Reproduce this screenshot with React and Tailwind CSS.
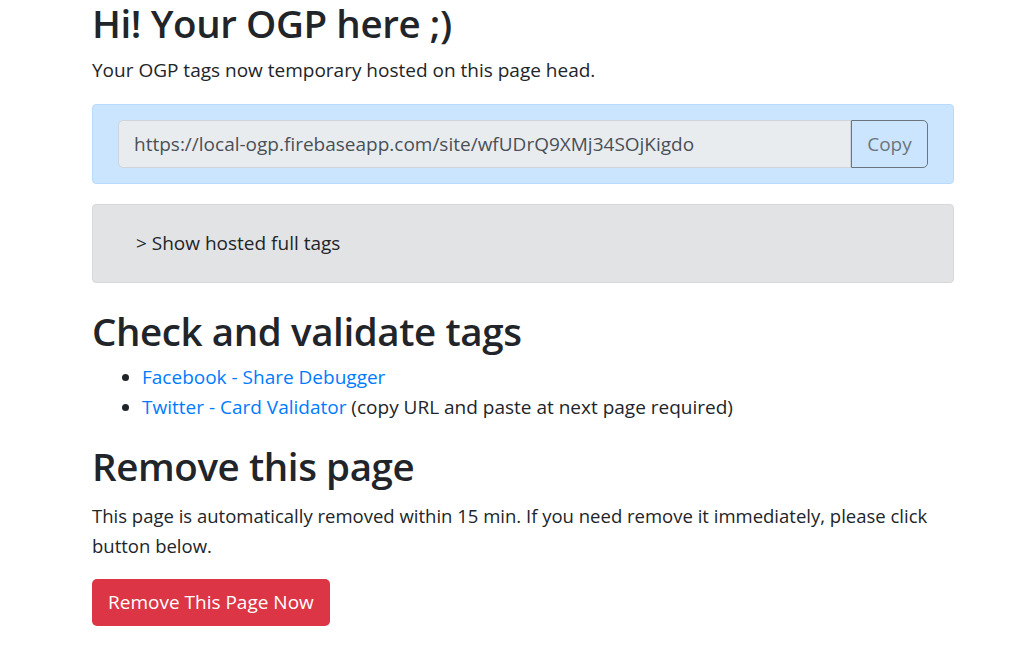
// App.jsx — OGP hosted page

const font = { fontFamily: '"Open Sans", "Noto Sans", "Liberation Sans", sans-serif' };

const UrlBox = ({ url }) => (
  <div className="h-[80px] rounded-[4px] border border-[#b8daff] bg-[#cce5ff] px-[25px] py-[15px]">
    <div className="flex h-[48px]">
      <div className="flex flex-1 items-center rounded-l-[5px] border border-[#ced4da] bg-[#e9ecef] px-[15px] text-[19px] text-[#495057]">
        {url}
      </div>
      <button className="w-[77px] rounded-r-[5px] border border-[#6c757d] text-[19px] text-[#6c757d]">Copy</button>
    </div>
  </div>
);

export default function App() {
  return (
    <div className="min-h-[650px] bg-white" style={font}>
      <div className="ml-[92px] w-[862px] text-[#212529]">
        <h1 className="text-[38.5px] font-semibold leading-[46px] tracking-[-0.4px]">Hi! Your OGP here ;)</h1>
        <p className="mt-[10px] text-[19px] leading-[28px]">Your OGP tags now temporary hosted on this page head.</p>

        <div className="mt-[20px]">
          <UrlBox url="https://local-ogp.firebaseapp.com/site/wfUDrQ9XMj34SOjKigdo" />
        </div>

        <div className="mt-[20px] flex h-[79px] items-center rounded-[4px] border border-[#d6d8db] bg-[#e2e3e5] pl-[43px] text-[19px]">
          &gt; Show hosted full tags
        </div>

        <h2 className="mt-[28px] text-[38.5px] font-semibold leading-[40px] tracking-[-0.4px]">Check and validate tags</h2>
        <ul className="mt-[11px] list-disc pl-[50px] text-[19px] leading-[30px]">
          <li><a href="#" className="text-[#007bff]">Facebook - Share Debugger</a></li>
          <li><a href="#" className="text-[#007bff]">Twitter - Card Validator</a> (copy URL and paste at next page required)</li>
        </ul>

        <h2 className="mt-[24px] text-[38.5px] font-semibold leading-[40px] tracking-[-0.4px]">Remove this page</h2>
        <p className="mt-[15px] text-[18.5px] leading-[30px]">
          This page is automatically removed within 15 min. If you need remove it immediately, please click button below.
        </p>
        <button className="mt-[18px] h-[47px] rounded-[5px] bg-[#dc3545] px-[16px] text-[19px] text-white">Remove This Page Now</button>
      </div>
    </div>
  );
}
